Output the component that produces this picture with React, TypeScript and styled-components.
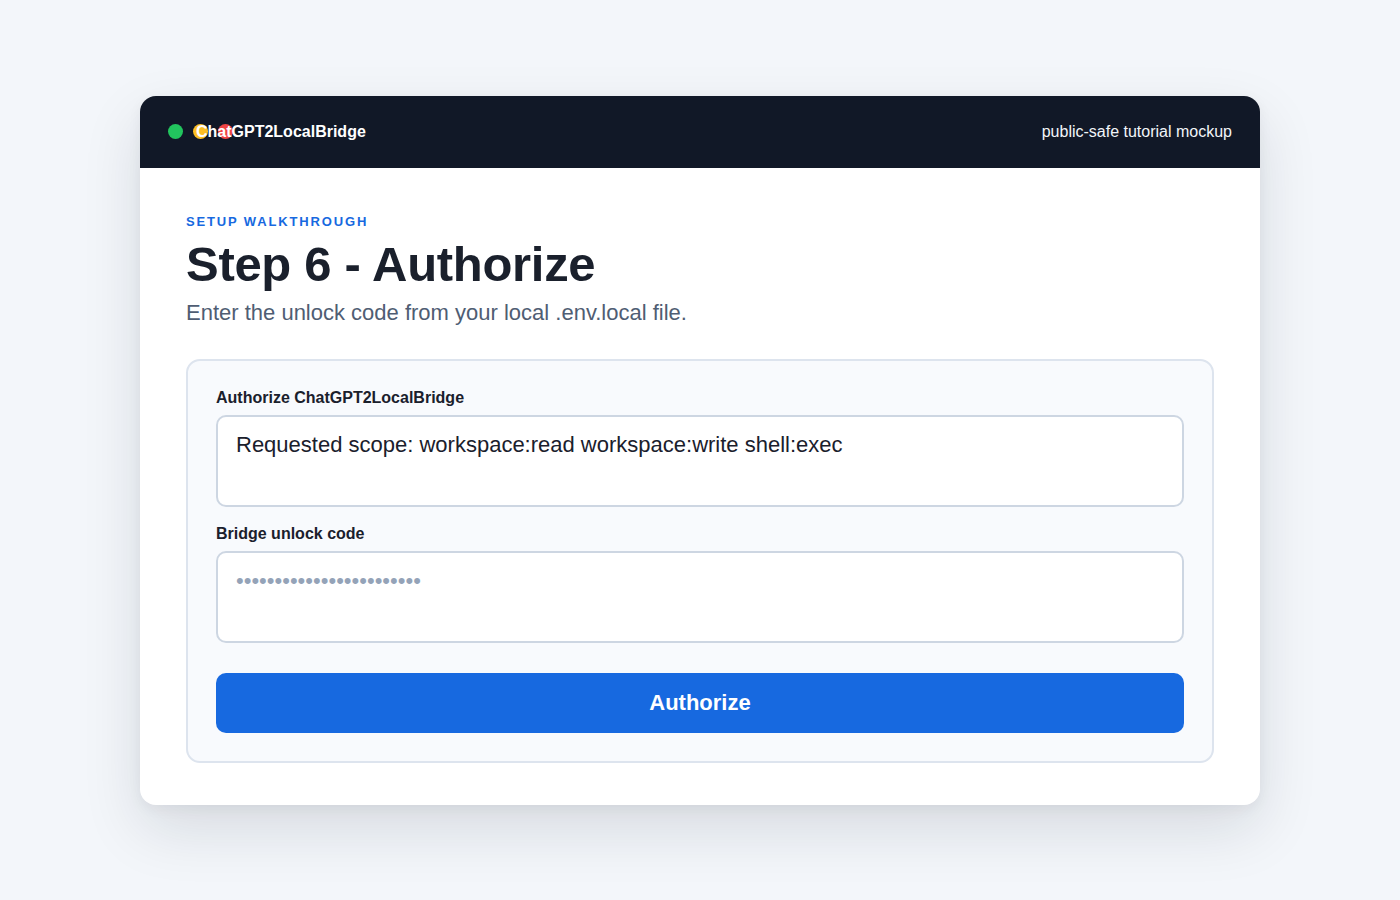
import React from "react";
import styled, { createGlobalStyle } from "styled-components";

const GlobalStyle = createGlobalStyle`
  html, body {
    margin: 0;
    padding: 0;
    background: #f3f6fa;
    font-family: "Liberation Sans", Arial, sans-serif;
  }
  * { box-sizing: border-box; }
`;

const Page = styled.div`
  min-height: 100vh;
  display: flex;
  align-items: center;
  justify-content: center;
`;

const Card = styled.div`
  width: 1120px;
  background: #ffffff;
  border-radius: 16px;
  overflow: hidden;
  box-shadow: 0 24px 60px rgba(15, 23, 42, 0.12), 0 4px 14px rgba(15, 23, 42, 0.05);
`;

const Header = styled.header`
  height: 72px;
  background: #111827;
  padding: 0 28px;
  display: flex;
  align-items: center;
  justify-content: space-between;
`;

const Brand = styled.div`
  display: flex;
  align-items: center;
  gap: 14px;
`;

const Dots = styled.div`
  display: flex;
  gap: 10px;
  width: 14px;
`;

const Dot = styled.span<{ $color: string }>`
  flex: none;
  width: 15px;
  height: 15px;
  border-radius: 50%;
  background: ${(p) => p.$color};
`;

const BrandName = styled.span`
  position: relative;
  color: #ffffff;
  font-size: 16px;
  font-weight: 700;
`;

const HeaderNote = styled.span`
  color: #f1f5f9;
  font-size: 16px;
`;

const Body = styled.main`
  padding: 46px 46px 42px;
`;

const Eyebrow = styled.div`
  color: #1769e0;
  font-size: 13px;
  line-height: 16px;
  font-weight: 700;
  letter-spacing: 1.85px;
  text-transform: uppercase;
`;

const Title = styled.h1`
  margin: 6px 0 0;
  color: #1a202c;
  font-size: 49px;
  line-height: 56px;
  font-weight: 700;
  letter-spacing: -0.3px;
`;

const Subtitle = styled.p`
  margin: 6px 0 0;
  color: #4f5d73;
  font-size: 22px;
  line-height: 30px;
`;

const Panel = styled.section`
  margin-top: 31px;
  background: #f8fafd;
  border: 2px solid #dde4ee;
  border-radius: 14px;
  padding: 28px;
  display: flex;
  flex-direction: column;
`;

const Field = styled.div`
  display: flex;
  flex-direction: column;
  margin-bottom: 18px;
`;

const Label = styled.label`
  color: #1a202c;
  font-size: 16px;
  line-height: 18px;
  font-weight: 700;
  margin-bottom: 8px;
`;

const Box = styled.textarea`
  height: 92px;
  resize: none;
  border: 2px solid #cdd6e2;
  border-radius: 10px;
  background: #ffffff;
  padding: 15px 18px;
  font-family: "Liberation Sans", Arial, sans-serif;
  font-size: 22px;
  line-height: 26px;
  color: #1a202c;
  outline: none;
  &::placeholder {
    color: #94a3b8;
  }
`;

const Button = styled.button`
  margin-top: 12px;
  height: 60px;
  border: none;
  border-radius: 10px;
  background: #1769e0;
  color: #ffffff;
  font-family: "Liberation Sans", Arial, sans-serif;
  font-size: 22px;
  font-weight: 700;
  cursor: pointer;
`;

export default function App() {
  return (
    <>
      <GlobalStyle />
      <Page>
        <Card>
          <Header>
            <Brand>
              <Dots>
                <Dot $color="#22c55e" />
                <Dot $color="#fbbf24" />
                <Dot $color="#ef4444" />
              </Dots>
              <BrandName>ChatGPT2LocalBridge</BrandName>
            </Brand>
            <HeaderNote>public-safe tutorial mockup</HeaderNote>
          </Header>
          <Body>
            <Eyebrow>Setup walkthrough</Eyebrow>
            <Title>Step 6 - Authorize</Title>
            <Subtitle>Enter the unlock code from your local .env.local file.</Subtitle>
            <Panel>
              <Field>
                <Label>Authorize ChatGPT2LocalBridge</Label>
                <Box readOnly defaultValue="Requested scope: workspace:read workspace:write shell:exec" />
              </Field>
              <Field>
                <Label>Bridge unlock code</Label>
                <Box placeholder="••••••••••••••••••••••••" />
              </Field>
              <Button>Authorize</Button>
            </Panel>
          </Body>
        </Card>
      </Page>
    </>
  );
}
